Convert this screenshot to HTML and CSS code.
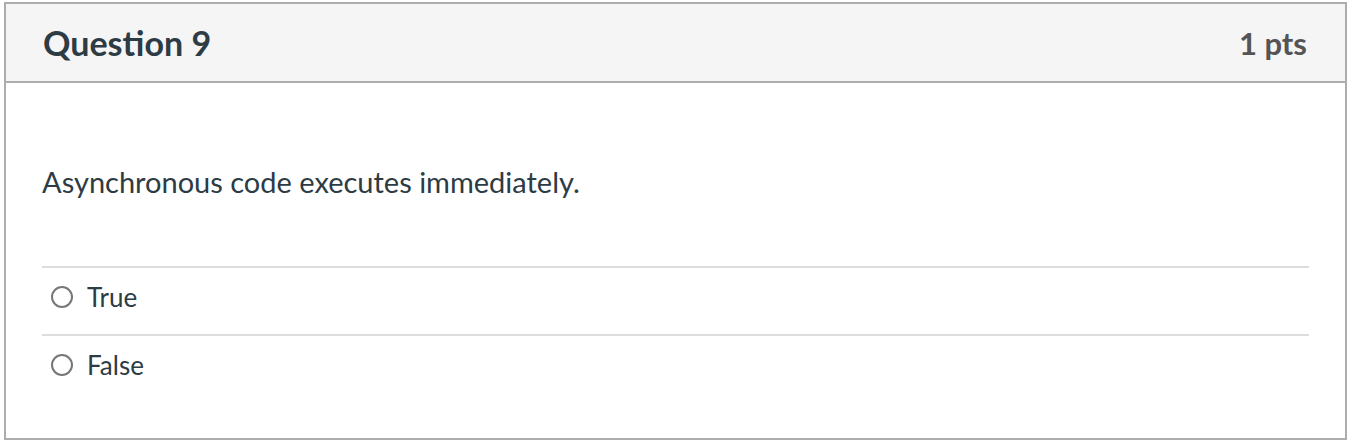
FILE: index.html
```html
<!DOCTYPE html>
<html>
<head>
<meta charset="utf-8">
<link rel="stylesheet" href="styles.css">
</head>
<body>
<div class="question">
  <div class="q-header">
    <h2 class="q-title">Question 9</h2>
    <div class="q-points">1 pts</div>
  </div>
  <div class="q-body">
    <p class="q-text">Asynchronous code executes immediately.</p>
    <div class="answers">
      <label class="answer"><span class="radio"></span><span class="answer-label">True</span></label>
      <label class="answer"><span class="radio"></span><span class="answer-label">False</span></label>
    </div>
  </div>
</div>
</body>
</html>
```
FILE: styles.css
```css
html, body {
  margin: 0;
  padding: 0;
  background: #fff;
}
body {
  padding: 2px 1px 0 4px;
  font-family: Lato, "Noto Sans", sans-serif;
  color: #2d3b45;
}
.question {
  border: 2px solid #adadad;
  height: 438px;
  box-sizing: border-box;
}
.q-header {
  height: 77px;
  background: #f5f5f5;
  border-bottom: 2px solid #adadad;
  display: flex;
  align-items: center;
  justify-content: space-between;
  padding: 0 38px 0 37px;
}
.q-title {
  margin: 0;
  font-size: 34px;
  font-weight: 700;
  color: #2d3b45;
}
.q-points {
  font-size: 31px;
  font-weight: 700;
  color: #545454;
}
.q-body {
  padding: 0 36px;
}
.q-text {
  margin: 0;
  height: 170px;
  padding-top: 13px;
  display: flex;
  align-items: center;
  font-size: 29px;
}
.answers {
  display: flex;
  flex-direction: column;
}
.answer {
  display: flex;
  align-items: center;
  height: 58px;
  padding-bottom: 8px;
  border-top: 2px solid #dddddd;
  font-size: 26px;
}
.radio {
  width: 18px;
  height: 18px;
  border: 2px solid #777;
  border-radius: 50%;
  margin: 0 14px 0 9px;
}
```
